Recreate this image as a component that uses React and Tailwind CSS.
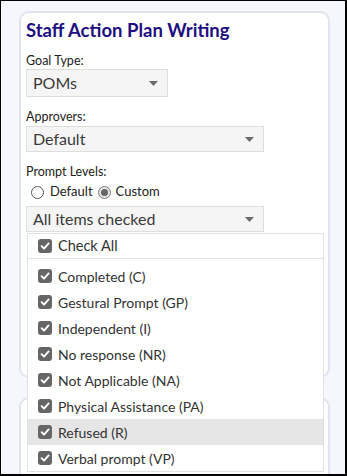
import { useState } from "react";

const FONT = { fontFamily: '"Lato", "Liberation Sans", sans-serif' };

const levels = [
  "Completed (C)",
  "Gestural Prompt (GP)",
  "Independent (I)",
  "No response (NR)",
  "Not Applicable (NA)",
  "Physical Assistance (PA)",
  "Refused (R)",
  "Verbal prompt (VP)",
];

// Small grey caret used by the select boxes
const Caret = () => (
  <svg width="9" height="5" viewBox="0 0 9 5" className="shrink-0">
    <path d="M0 0 L9 0 L4.5 5 Z" fill="#6b6b6b" />
  </svg>
);

const CheckBox = () => (
  <span className="w-[14px] h-[14px] rounded-[3px] bg-[#666] flex items-center justify-center shrink-0">
    <svg width="10" height="10" viewBox="0 0 10 10">
      <path d="M1.6 5.2 L4 7.6 L8.6 2.4" fill="none" stroke="#fff" strokeWidth="1.9" strokeLinecap="round" strokeLinejoin="round" />
    </svg>
  </span>
);

const Select = ({ value, className }) => (
  <div className={`flex items-center justify-between bg-[#f5f5f5] border border-[#dedede] pl-[6px] pr-[9px] text-[16px] text-[#3a3a3a] ${className}`}>
    <span>{value}</span>
    <Caret />
  </div>
);

export default function App() {
  const [hovered] = useState("Refused (R)");

  return (
    <div
      className="relative w-[347px] h-[476px] overflow-hidden bg-[#f6f7fc] border-l border-r-2 border-b-2 border-t border-black"
      style={FONT}
    >
      <div className="ml-[18px] mt-[10px] w-[311px] h-[367px] rounded-[10px] border-2 border-[#dfe4ee] bg-white px-[5px] pt-[5px]">
        <h1 className="text-[18.5px] leading-[25px] font-bold text-[#1e0f80]">Staff Action Plan Writing</h1>

        <div className="mt-[10px] text-[12.5px] leading-[16px] text-[#222]">Goal Type:</div>
        <Select value="POMs" className="w-[142px] h-[28px]" />

        <div className="mt-[12px] text-[12.5px] leading-[16px] text-[#222]">Approvers:</div>
        <Select value="Default" className="w-[238px] h-[26px] mt-[1px]" />

        <div className="mt-[12px] text-[12.5px] leading-[16px] text-[#222]">Prompt Levels:</div>
        <div className="flex items-center h-[18px] mt-[3px] pl-[5px] text-[13px] text-[#222]">
          <span className="w-[13px] h-[13px] rounded-full border border-[#555] bg-white shrink-0" />
          <span className="ml-[6px]">Default</span>
          <span className="ml-[5px] w-[13px] h-[13px] rounded-full border border-[#777] bg-[#e6e6e6] flex items-center justify-center shrink-0">
            <span className="w-[7px] h-[7px] rounded-full bg-[#666]" />
          </span>
          <span className="ml-[5px]">Custom</span>
        </div>
        <Select value="All items checked" className="w-[238px] h-[26px] mt-[5px]" />
      </div>

      <div className="ml-[18px] mt-[19px] w-[311px] h-[120px] rounded-[10px] border-2 border-[#dfe4ee] bg-white" />

      {/* open multi-select popup */}
      <div className="absolute left-[26px] top-[232px] w-[297px] h-[239px] bg-white border border-[#e2e2e2] text-[14px] text-[#333]">
        <div className="flex items-center gap-[6px] h-[25px] pl-[10px] border-b border-[#e2e2e2]">
          <CheckBox />
          <span className="text-[14.5px]">Check All</span>
        </div>
        <div className="pt-[4px]">
          {levels.map((l) => (
            <div
              key={l}
              className={`flex items-center gap-[6px] h-[26px] pl-[10px] ${l === hovered ? "bg-[#e6e6e6]" : ""}`}
            >
              <CheckBox />
              <span>{l}</span>
            </div>
          ))}
        </div>
      </div>
    </div>
  );
}
